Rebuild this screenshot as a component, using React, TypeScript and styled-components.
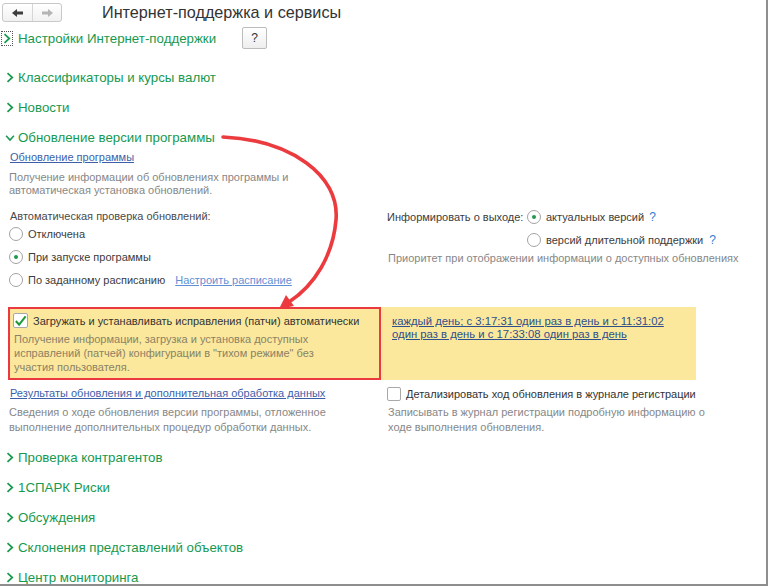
import styled, { createGlobalStyle } from "styled-components";

const GlobalStyle = createGlobalStyle`
  html, body {
    margin: 0;
    padding: 0;
    background: #ffffff;
  }
  body {
    font-family: "Liberation Sans", Arial, sans-serif;
    color: #333333;
  }
  * {
    box-sizing: border-box;
  }
`;

const GREEN = "#17994f";

function ChevronRight() {
  return (
    <svg width="8" height="11" viewBox="0 0 8 11">
      <path d="M1.5 1.2 L6.3 5.5 L1.5 9.8" fill="none" stroke={GREEN} strokeWidth="1.7" />
    </svg>
  );
}

function ChevronDown() {
  return (
    <svg width="11" height="8" viewBox="0 0 11 8">
      <path d="M1.2 1.5 L5.5 6.3 L9.8 1.5" fill="none" stroke={GREEN} strokeWidth="1.7" />
    </svg>
  );
}

function ArrowIcon({ dir, color }: { dir: "left" | "right"; color: string }) {
  const d =
    dir === "left"
      ? "M1 5 L6 1 L6 3.5 L12 3.5 L12 6.5 L6 6.5 L6 9 Z"
      : "M12 5 L7 1 L7 3.5 L1 3.5 L1 6.5 L7 6.5 L7 9 Z";
  return (
    <svg width="13" height="10" viewBox="0 0 13 10">
      <path d={d} fill={color} />
    </svg>
  );
}

function Check() {
  return (
    <svg width="14" height="12" viewBox="0 0 14 12">
      <path d="M2 6 L5.5 10 L12.5 1" fill="none" stroke="#1f9a3c" strokeWidth="2.2" />
    </svg>
  );
}

export default function App() {
  return (
    <>
      <GlobalStyle />
      <Page>
        <Header>
          <NavGroup>
            <NavButton>
              <ArrowIcon dir="left" color="#3d3d3d" />
            </NavButton>
            <NavButton $divider>
              <ArrowIcon dir="right" color="#b4b4b4" />
            </NavButton>
          </NavGroup>
          <Title>Интернет-поддержка и сервисы</Title>
        </Header>

        <FirstSection>
          <Chevron $focused>
            <ChevronRight />
          </Chevron>
          <SectionTitle>Настройки Интернет-поддержки</SectionTitle>
          <HelpButton>?</HelpButton>
        </FirstSection>

        <Section>
          <Chevron>
            <ChevronRight />
          </Chevron>
          <SectionTitle>Классификаторы и курсы валют</SectionTitle>
        </Section>
        <Section>
          <Chevron>
            <ChevronRight />
          </Chevron>
          <SectionTitle>Новости</SectionTitle>
        </Section>
        <Section $open>
          <Chevron>
            <ChevronDown />
          </Chevron>
          <SectionTitle>Обновление версии программы</SectionTitle>
        </Section>

        <Content>
          <Link>Обновление программы</Link>
          <Note $top={7}>
            Получение информации об обновлениях программы и
            <br />
            автоматическая установка обновлений.
          </Note>

          <Columns>
            <Column>
              <Label>Автоматическая проверка обновлений:</Label>
              <RadioRow>
                <Radio />
                <OptionText>Отключена</OptionText>
              </RadioRow>
              <RadioRow>
                <Radio $checked />
                <OptionText>При запуске программы</OptionText>
              </RadioRow>
              <RadioRow>
                <Radio />
                <OptionText>По заданному расписанию</OptionText>
                <Link $light $left={10}>
                  Настроить расписание
                </Link>
              </RadioRow>
            </Column>
            <Column>
              <InlineRow>
                <FieldLabel>Информировать о выходе:</FieldLabel>
                <Radio $checked />
                <OptionText>актуальных версий</OptionText>
                <Hint>?</Hint>
              </InlineRow>
              <InlineRow $indent={140} $height={22} $top={6}>
                <Radio />
                <OptionText>версий длительной поддержки</OptionText>
                <Hint $gap={6}>?</Hint>
              </InlineRow>
              <Note $top={0} $loose>
                Приоритет при отображении информации о доступных обновлениях
              </Note>
            </Column>
          </Columns>

          <Highlight>
            <Marked>
              <CheckRow>
                <CheckBox>
                  <Check />
                </CheckBox>
                <CheckText>Загружать и устанавливать исправления (патчи) автоматически</CheckText>
              </CheckRow>
              <Note $top={4} $tint>
                Получение информации, загрузка и установка доступных
                <br />
                исправлений (патчей) конфигурации в "тихом режиме" без
                <br />
                участия пользователя.
              </Note>
            </Marked>
            <ScheduleCell>
              <Link $dark $tight>
                каждый день; с 3:17:31 один раз в день и с 11:31:02
                <br />
                один раз в день и с 17:33:08 один раз в день
              </Link>
            </ScheduleCell>
          </Highlight>

          <Columns $top={6}>
            <Column>
              <Link>Результаты обновления и дополнительная обработка данных</Link>
              <Note $top={5} $loose>
                Сведения о ходе обновления версии программы, отложенное
                <br />
                выполнение дополнительных процедур обработки данных.
              </Note>
            </Column>
            <Column>
              <CheckRow>
                <CheckBox $small />
                <CheckText>Детализировать ход обновления в журнале регистрации</CheckText>
              </CheckRow>
              <Note $top={4} $loose>
                Записывать в журнал регистрации подробную информацию о
                <br />
                ходе выполнения обновления.
              </Note>
            </Column>
          </Columns>
        </Content>

        <Section $first>
          <Chevron>
            <ChevronRight />
          </Chevron>
          <SectionTitle>Проверка контрагентов</SectionTitle>
        </Section>
        <Section>
          <Chevron>
            <ChevronRight />
          </Chevron>
          <SectionTitle>1СПАРК Риски</SectionTitle>
        </Section>
        <Section>
          <Chevron>
            <ChevronRight />
          </Chevron>
          <SectionTitle>Обсуждения</SectionTitle>
        </Section>
        <Section>
          <Chevron>
            <ChevronRight />
          </Chevron>
          <SectionTitle>Склонения представлений объектов</SectionTitle>
        </Section>
        <Section>
          <Chevron>
            <ChevronRight />
          </Chevron>
          <SectionTitle>Центр мониторинга</SectionTitle>
        </Section>

        <Annotation width="768" height="586" viewBox="0 0 768 586">
          <path
            d="M223 137 C 290 140 340 175 336 220 C 333 255 315 285 289 302"
            fill="none"
            stroke="#ec3b3f"
            strokeWidth="3.6"
            strokeLinecap="round"
          />
          <path d="M279 309 L286 295 L294 306 Z" fill="#ec3b3f" />
        </Annotation>
      </Page>
    </>
  );
}

const Page = styled.div`
  position: relative;
  width: 768px;
  height: 586px;
  border-right: 2px solid #8e8e8e;
  border-bottom: 2px solid #8e8e8e;
  overflow: hidden;
  background: #ffffff;
`;

const Header = styled.div`
  display: flex;
  align-items: center;
  height: 23px;
  padding-left: 2px;
`;

const NavGroup = styled.div`
  display: flex;
  margin-top: 2px;
  height: 19px;
  border: 1px solid #c9c9c9;
  border-radius: 3px;
  background: linear-gradient(#ffffff, #f1f1f1);
`;

const NavButton = styled.div<{ $divider?: boolean }>`
  width: 29px;
  display: flex;
  align-items: center;
  justify-content: center;
  border-left: ${(p) => (p.$divider ? "1px solid #d6d6d6" : "none")};
`;

const Title = styled.div`
  margin-left: 40px;
  margin-top: 1px;
  font-size: 16.2px;
  color: #333333;
  line-height: 23px;
`;

const Section = styled.div<{ $open?: boolean; $first?: boolean }>`
  display: flex;
  align-items: center;
  height: ${(p) => (p.$open ? "28px" : "30px")};
  padding-left: 4px;
  padding-top: ${(p) => (p.$open ? "3px" : "0")};
  margin-top: ${(p) => (p.$first ? "8px" : "0")};
`;

const FirstSection = styled(Section)`
  margin-bottom: 9px;
  padding-left: 1px;
`;

const Chevron = styled.div<{ $focused?: boolean }>`
  width: 12px;
  height: 15px;
  display: flex;
  align-items: center;
  justify-content: center;
  margin-right: ${(p) => (p.$focused ? "5px" : "2px")};
  border: 1px ${(p) => (p.$focused ? "dotted #555555" : "solid transparent")};
`;

const SectionTitle = styled.div`
  font-size: 13.3px;
  color: ${GREEN};
`;

const HelpButton = styled.div`
  margin-left: 26px;
  width: 25px;
  height: 22px;
  border: 1px solid #bcbcbc;
  border-radius: 2px;
  background: linear-gradient(#ffffff, #eeeeee);
  display: flex;
  align-items: center;
  justify-content: center;
  font-size: 12px;
  color: #333333;
`;

const Content = styled.div`
  padding-left: 8px;
  font-size: 11px;
`;

const Link = styled.div<{ $light?: boolean; $dark?: boolean; $left?: number; $tight?: boolean }>`
  display: inline-block;
  margin-left: ${(p) => p.$left ?? 2}px;
  font-size: ${(p) => (p.$dark ? "11.3px" : "11px")};
  line-height: ${(p) => (p.$tight ? "13px" : "14px")};
  text-decoration: underline;
  color: ${(p) => (p.$light ? "#5f90d4" : p.$dark ? "#2f4f8c" : "#3d5fa9")};
`;

const Note = styled.div<{ $top: number; $tint?: boolean; $loose?: boolean }>`
  margin-top: ${(p) => p.$top}px;
  margin-left: 1px;
  font-size: 11px;
  line-height: ${(p) => (p.$loose ? "14.5px" : p.$tint ? "14px" : "13px")};
  color: ${(p) => (p.$tint ? "#8a8265" : "#878787")};
`;

const Columns = styled.div<{ $top?: number }>`
  display: grid;
  grid-template-columns: 373px 1fr;
  column-gap: 6px;
  margin-top: ${(p) => p.$top ?? 14}px;
`;

const Column = styled.div`
  display: flex;
  flex-direction: column;
`;

const Label = styled.div`
  margin-left: 2px;
  line-height: 11px;
  color: #4a4a4a;
`;

const RadioRow = styled.div`
  display: flex;
  align-items: center;
  height: 23px;
  margin-left: 1px;
`;

const Radio = styled.span<{ $checked?: boolean }>`
  position: relative;
  width: 14px;
  height: 14px;
  border: 1px solid #a3a3a3;
  border-radius: 50%;
  background: #ffffff;
  flex-shrink: 0;

  &::after {
    content: "";
    display: ${(p) => (p.$checked ? "block" : "none")};
    position: absolute;
    left: 4px;
    top: 4px;
    width: 4px;
    height: 4px;
    border-radius: 50%;
    background: #1f9a4a;
  }
`;

const OptionText = styled.span`
  margin-left: 5px;
  color: #3c3c3c;
  white-space: nowrap;
`;

const InlineRow = styled.div<{ $indent?: number; $height?: number; $top?: number }>`
  display: flex;
  align-items: center;
  height: ${(p) => p.$height ?? 12}px;
  margin-top: ${(p) => p.$top ?? 0}px;
  padding-left: ${(p) => p.$indent ?? 0}px;
`;

const FieldLabel = styled.span`
  width: 140px;
  color: #3c3c3c;
  white-space: nowrap;
`;

const Hint = styled.span<{ $gap?: number }>`
  margin-left: ${(p) => p.$gap ?? 5}px;
  color: #2f7fcf;
  font-size: 12px;
`;

const Highlight = styled.div`
  display: grid;
  grid-template-columns: 373px 1fr;
  column-gap: 6px;
  width: 688px;
  margin-top: 16px;
  background: #fbe89d;
`;

const Marked = styled.div`
  border: 2px solid #ea3a3f;
  height: 73px;
  padding: 4px 3px 0;
`;

const ScheduleCell = styled.div`
  padding: 8px 0 0 3px;
`;

const CheckRow = styled.div`
  display: flex;
  align-items: center;
  height: 15px;
`;

const CheckBox = styled.span<{ $small?: boolean }>`
  width: ${(p) => (p.$small ? "14px" : "15px")};
  height: ${(p) => (p.$small ? "14px" : "15px")};
  border: 1px solid #a8a8a8;
  border-radius: 2px;
  background: #ffffff;
  display: flex;
  align-items: center;
  justify-content: center;
  flex-shrink: 0;
`;

const CheckText = styled.span`
  margin-left: 5px;
  color: #333333;
  white-space: nowrap;
`;

const Annotation = styled.svg`
  position: absolute;
  left: 0;
  top: 0;
  pointer-events: none;
`;
